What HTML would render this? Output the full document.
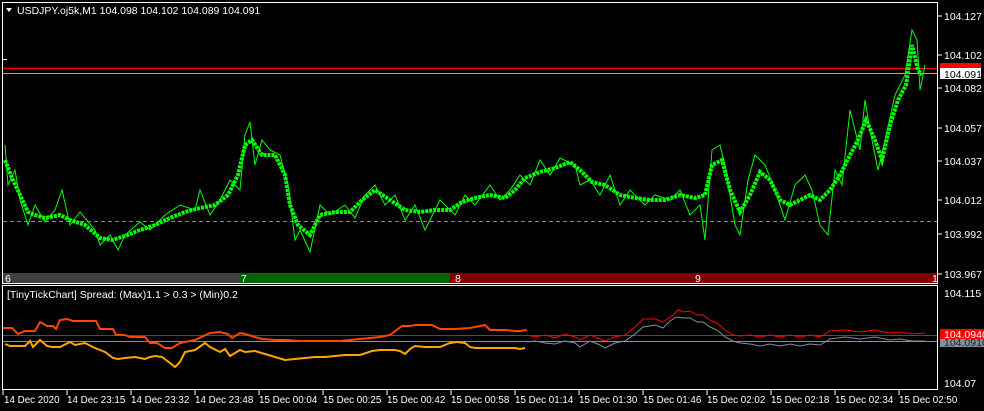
<!DOCTYPE html>
<html><head><meta charset="utf-8"><style>
body{margin:0;background:#000;width:984px;height:411px;overflow:hidden;font-family:"Liberation Sans",sans-serif;}
svg{display:block}
text{font-family:"Liberation Sans",sans-serif;font-size:10.5px;fill:#fff}
.t text{font-size:9.8px}
</style></head><body>
<svg width="984" height="411" viewBox="0 0 984 411">
<rect width="984" height="411" fill="#000"/>
<rect x="2.5" y="2.5" width="935" height="281" fill="none" stroke="#fff"/>
<line x1="3" y1="221.5" x2="937" y2="221.5" stroke="#888" stroke-dasharray="4,3"/>
<line x1="3" y1="68.5" x2="937" y2="68.5" stroke="#f00" stroke-width="1.5"/>
<line x1="3" y1="73.5" x2="937" y2="73.5" stroke="#aaa"/>
<line x1="3" y1="59.5" x2="7" y2="59.5" stroke="#fff"/>
<path d="M6 8 L12 8 L9 12Z" fill="#fff"/>
<text x="17" y="14">USDJPY.oj5k,M1  104.098 104.102 104.089 104.091</text>
<g fill="none" stroke="#00ff00">
<polyline stroke-width="1" points="5,145 8,185 15,170 20,200 28,225 35,205 45,222 55,210 62,190 70,225 80,212 95,230 100,245 110,235 118,250 125,235 140,222 150,230 165,215 180,205 195,210 200,190 210,215 220,200 230,180 240,190 245,135 250,122 255,165 262,140 270,150 280,155 288,185 295,240 300,230 310,252 320,205 330,215 345,205 355,218 365,195 375,185 385,205 395,195 405,220 415,205 425,230 440,200 455,215 465,195 475,205 490,185 500,200 510,190 520,175 530,185 540,160 550,175 560,158 575,165 580,185 590,180 600,195 610,175 620,205 630,190 645,205 655,195 670,200 680,190 690,215 700,205 705,240 712,150 720,145 725,165 735,225 740,235 748,180 755,155 765,165 775,190 785,220 795,185 805,175 812,190 820,225 828,235 835,170 842,185 850,110 860,150 865,100 870,130 878,170 885,140 895,95 905,75 912,30 917,40 920,90 925,65"/>
<polyline stroke-width="4" stroke-dasharray="3,1" points="5,160 12,178 20,195 28,212 35,215 45,218 60,215 70,220 85,225 100,238 112,240 125,236 140,230 155,225 170,218 185,212 200,208 215,205 228,195 238,175 245,145 252,140 262,155 275,155 285,175 290,205 298,225 310,235 320,215 335,212 350,212 362,200 375,190 390,200 405,210 420,212 435,210 450,210 462,202 475,198 490,195 505,198 515,190 525,178 540,172 555,168 570,162 580,170 592,182 605,185 620,195 635,198 650,200 665,200 680,195 695,198 705,195 712,165 722,160 730,190 740,212 750,195 760,172 770,180 780,200 790,205 800,200 810,195 820,200 830,190 840,175 850,155 858,140 866,120 875,140 882,160 890,125 898,100 906,85 912,45 918,70 922,75"/>
</g>
<rect x="3" y="273" width="237" height="10" fill="#404040"/>
<rect x="240" y="273" width="210" height="10" fill="#006400"/>
<rect x="450" y="273" width="487" height="10" fill="#800000"/>
<text x="5" y="282">6</text><text x="241" y="282">7</text><text x="455" y="282">8</text><text x="695" y="282">9</text><text x="932" y="282">1</text>
<rect x="2.5" y="285.5" width="935" height="104" fill="none" stroke="#fff"/>
<text x="7" y="298">[TinyTickChart] Spread: (Max)1.1 &gt; 0.3 &gt; (Min)0.2</text>
<line x1="3" y1="335.5" x2="937" y2="335.5" stroke="#f00"/>
<line x1="3" y1="341.5" x2="937" y2="341.5" stroke="#8090a0"/>
<polyline fill="none" stroke="#ff4500" stroke-width="2" points="3,328 12,328 18,334 25,331 35,331 40,322 47,326 53,326 56,329 60,320 67,319 73,321 96,321 100,329 113,329 116,335 125,335 130,337 145,337 150,343 157,343 165,348 172,348 180,343 195,340 210,333 220,332 228,334 232,338 240,333 245,334 255,337 262,339 275,340 285,340 300,341 340,341 360,339 380,337 390,335 398,329 402,326 410,326 415,325 420,325 432,325 440,329 455,329 470,328 485,325 490,330 495,330 505,330 515,331 520,331 527,330"/>
<polyline fill="none" stroke="#ffa500" stroke-width="2" points="5,344 10,346 25,346 30,341 33,347 40,340 47,346 52,347 60,347 70,342 75,345 85,343 95,348 105,352 113,358 118,359 125,358 135,357 145,359 150,357 155,356 162,357 170,363 175,367 180,362 185,352 195,350 205,343 210,347 220,352 225,349 230,356 240,350 245,352 255,351 265,354 275,357 285,360 295,359 305,358 315,357 325,357 345,355 360,355 372,351 380,350 395,350 400,351 405,354 410,349 415,346 425,347 440,347 450,343 457,342 465,343 470,347 475,348 490,348 500,348 515,348 520,349 525,348"/>
<polyline fill="none" stroke="#f00" stroke-width="1" points="527,335 535,337 545,335 555,338 565,334 575,337 580,340 590,335 600,339 605,341 615,337 625,335 635,327 643,319 655,319 663,322 673,315 678,310 684,312 690,311 697,315 703,315 710,320 717,323 725,330 733,335 740,336 750,335 760,337 770,335 780,337 790,335 800,337 810,335 820,337 830,331 845,330 860,332 875,330 890,333 900,332 912,334 925,333"/>
<polyline fill="none" stroke="#8090a0" stroke-width="1" points="527,342 535,341 545,343 555,344 565,341 575,343 580,347 590,341 600,345 605,348 615,343 625,341 635,334 643,327 655,325 663,328 670,321 677,317 684,318 690,318 697,322 703,322 710,327 717,330 725,337 733,341 740,343 750,344 760,346 770,344 780,346 790,344 800,346 810,344 820,345 830,339 845,337 860,339 875,337 890,340 900,339 912,341 925,341"/>
<g stroke="#fff">
<line x1="938" y1="16" x2="942" y2="16"/><line x1="938" y1="55" x2="942" y2="55"/><line x1="938" y1="88" x2="942" y2="88"/><line x1="938" y1="128" x2="942" y2="128"/><line x1="938" y1="161" x2="942" y2="161"/><line x1="938" y1="200" x2="942" y2="200"/><line x1="938" y1="234" x2="942" y2="234"/><line x1="938" y1="274" x2="942" y2="274"/>
</g>
<text x="944" y="20">104.127</text><text x="944" y="59">104.102</text><text x="944" y="92">104.082</text><text x="944" y="132">104.057</text><text x="944" y="165">104.037</text><text x="944" y="204">104.012</text><text x="944" y="238">103.992</text><text x="944" y="278">103.967</text>
<rect x="940" y="63" width="41" height="6" fill="#f00"/>
<rect x="940" y="68" width="41" height="11" fill="#fff"/>
<text x="944" y="78" style="fill:#000">104.091</text>
<text x="944" y="297">104.115</text><text x="944" y="387">104.07</text>
<rect x="940" y="329" width="44" height="10" fill="#f00"/>
<rect x="940" y="339" width="44" height="8" fill="#8090a0"/>
<text x="944" y="338">104.0940</text>
<text x="944" y="346" style="fill:#222">104.0910</text>
<g stroke="#fff"><line x1="3" y1="390" x2="3" y2="395"/><line x1="67" y1="390" x2="67" y2="395"/><line x1="131" y1="390" x2="131" y2="395"/><line x1="195" y1="390" x2="195" y2="395"/><line x1="259" y1="390" x2="259" y2="395"/><line x1="323" y1="390" x2="323" y2="395"/><line x1="387" y1="390" x2="387" y2="395"/><line x1="451" y1="390" x2="451" y2="395"/><line x1="515" y1="390" x2="515" y2="395"/><line x1="579" y1="390" x2="579" y2="395"/><line x1="643" y1="390" x2="643" y2="395"/><line x1="707" y1="390" x2="707" y2="395"/><line x1="771" y1="390" x2="771" y2="395"/><line x1="835" y1="390" x2="835" y2="395"/><line x1="899" y1="390" x2="899" y2="395"/></g>
<g class="t">
<text x="4" y="403">14 Dec 2020</text><text x="67" y="403">14 Dec 23:15</text><text x="131" y="403">14 Dec 23:32</text><text x="195" y="403">14 Dec 23:48</text><text x="259" y="403">15 Dec 00:04</text><text x="323" y="403">15 Dec 00:25</text><text x="387" y="403">15 Dec 00:42</text><text x="451" y="403">15 Dec 00:58</text><text x="515" y="403">15 Dec 01:14</text><text x="579" y="403">15 Dec 01:30</text><text x="643" y="403">15 Dec 01:46</text><text x="707" y="403">15 Dec 02:02</text><text x="771" y="403">15 Dec 02:18</text><text x="835" y="403">15 Dec 02:34</text><text x="899" y="403">15 Dec 02:50</text>
</g>
</svg>
</body></html>
